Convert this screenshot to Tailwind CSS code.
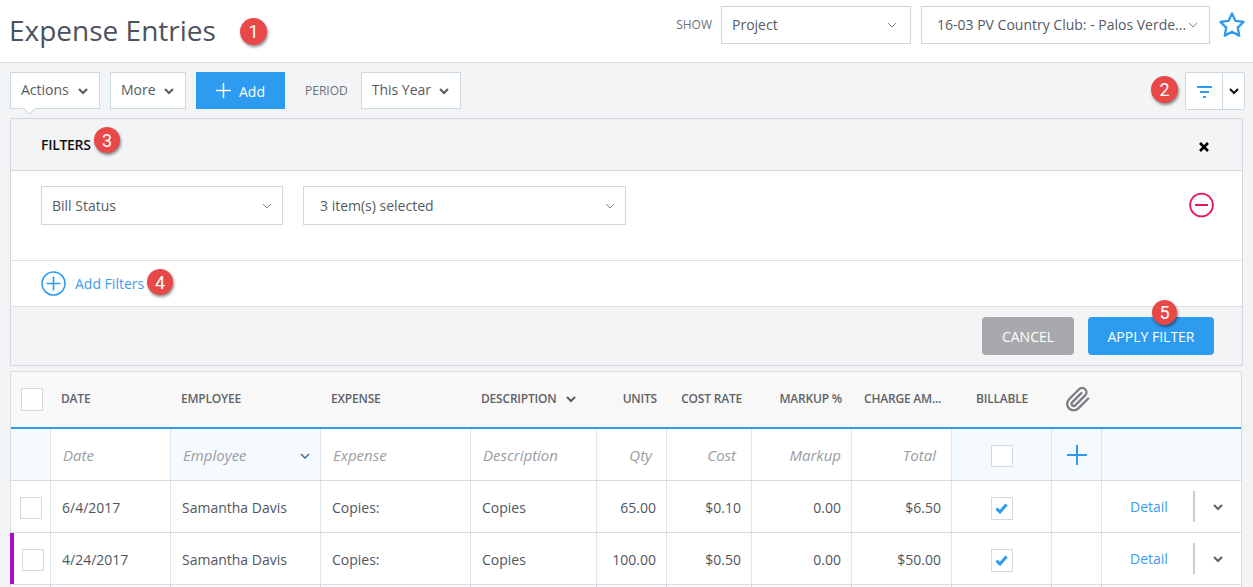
<!DOCTYPE html>
<html lang="en">
<head>
  <meta charset="UTF-8" />
  <title>Expense Entries</title>
  <script src="https://cdn.jsdelivr.net/npm/@tailwindcss/browser@4"></script>
</head>
<body class="h-[587px] overflow-hidden bg-[#f3f4f6] font-['Open_Sans',sans-serif] text-[14px] text-[#555b63] relative">

<!-- Top header -->
<header class="h-[63px] bg-white border-b border-[#d5dce2] flex items-center pl-[9px]">
  <h1 class="text-[28px] leading-none text-[#4d535c] -mt-[3px]">Expense Entries</h1>
  <div class="ml-auto flex items-center self-start pt-[6px]">
    <span class="text-[12px] text-[#6b7179] mr-[9px]">SHOW</span>
    <div class="w-[190px] h-[38px] bg-white border border-[#ccd6de] flex items-center pl-[10px] pr-[13px] justify-between">
      <span class="-mt-[2px]">Project</span>
      <svg class="w-[10px] h-[6px]" viewBox="0 0 10 6" fill="none" stroke="#7a8590" stroke-width="1"><path d="M1 1l4 4 4-4"/></svg>
    </div>
    <div class="w-[289px] h-[38px] ml-[10px] bg-white border border-[#ccd6de] flex items-center pl-[15px] pr-[11px] justify-between">
      <span class="whitespace-nowrap -mt-[2px]">16-03 PV Country Club: - Palos Verde...</span>
      <svg class="w-[10px] h-[6px]" viewBox="0 0 10 6" fill="none" stroke="#7a8590" stroke-width="1"><path d="M1 1l4 4 4-4"/></svg>
    </div>
    <svg class="w-[28px] h-[28px] ml-[8px] mr-[7px]" viewBox="0 0 24 24" fill="none" stroke="#2d9bf0" stroke-width="2" stroke-linejoin="round"><path d="M12 2.2l3 6.3 6.9.9-5 4.8 1.3 6.9-6.2-3.4-6.2 3.4 1.3-6.9-5-4.8 6.9-.9z"/></svg>
  </div>
</header>

<!-- Toolbar -->
<div class="h-[55px] flex items-start pt-[9px] pl-[10px] pr-[8px]">
  <div class="relative w-[90px] h-[37px] bg-white border border-[#ccd9e0] flex items-center justify-between pl-[10px] pr-[11px]">
    <span class="-mt-[2px]">Actions</span>
    <svg class="w-[10px] h-[7px] mt-[2px]" viewBox="0 0 10 7" fill="none" stroke="#555b63" stroke-width="2"><path d="M1 1l4 4 4-4"/></svg>
    <span class="absolute left-[14px] -bottom-[5px] w-[9px] h-[9px] bg-white border-r border-b border-[#ccd9e0] rotate-45"></span>
  </div>
  <div class="w-[76px] h-[37px] ml-[10px] bg-white border border-[#ccd9e0] flex items-center justify-between pl-[10px] pr-[11px]">
    <span class="-mt-[2px]">More</span>
    <svg class="w-[10px] h-[7px] mt-[2px]" viewBox="0 0 10 7" fill="none" stroke="#555b63" stroke-width="2"><path d="M1 1l4 4 4-4"/></svg>
  </div>
  <div class="w-[89px] h-[37px] ml-[10px] bg-[#2d9bf0] text-white flex items-center justify-center gap-[8px]">
    <svg class="w-[15px] h-[15px]" viewBox="0 0 15 15" stroke="#fff" stroke-width="1.5"><path d="M7.5 0v15M0 7.5h15"/></svg>
    <span class="mt-[1px]">Add</span>
  </div>
  <span class="ml-[20px] mt-[10px] text-[12px] text-[#6b7179]">PERIOD</span>
  <div class="w-[100px] h-[37px] ml-[13px] bg-white border border-[#ccd9e0] flex items-center justify-between pl-[10px] pr-[11px]">
    <span class="-mt-[2px]">This Year</span>
    <svg class="w-[10px] h-[7px] mt-[2px]" viewBox="0 0 10 7" fill="none" stroke="#555b63" stroke-width="2"><path d="M1 1l4 4 4-4"/></svg>
  </div>
  <div class="ml-auto w-[60px] h-[38px] bg-white border border-[#ccd9e0] rounded-[2px] flex">
    <div class="w-[37px] border-r border-[#ccd9e0] flex items-center justify-center">
      <svg class="w-[15px] h-[12px] mt-[2px]" viewBox="0 0 15 12" stroke="#2d9bf0" stroke-width="2"><path d="M0 1h15M3 6h9M6 11h3"/></svg>
    </div>
    <div class="flex-1 flex items-center justify-center">
      <svg class="w-[10px] h-[7px]" viewBox="0 0 10 7" fill="none" stroke="#111" stroke-width="2"><path d="M1 1l4 4 4-4"/></svg>
    </div>
  </div>
</div>

<!-- Filters panel -->
<section class="ml-[10px] w-[1233px] h-[248px] border border-[#d3d7db] flex flex-col">
  <div class="h-[52px] shrink-0 border-b border-[#d3d8de] flex items-center justify-between pl-[30px] pr-[33px]">
    <span class="text-[14px] font-semibold text-[#111] tracking-[-0.3px]">FILTERS</span>
    <svg class="w-[10px] h-[10px] mt-[4px]" viewBox="0 0 10 10" stroke="#000" stroke-width="2.6"><path d="M1 1l8 8M9 1l-8 8"/></svg>
  </div>
  <div class="h-[90px] shrink-0 bg-white border-b border-[#dbe1e7] flex items-start pt-[15px] pl-[30px] pr-[28px]">
    <div class="w-[242px] h-[39px] border border-[#ccd9e0] flex items-center justify-between pl-[10px] pr-[10px]">
      <span>Bill Status</span>
      <svg class="w-[10px] h-[6px]" viewBox="0 0 10 6" fill="none" stroke="#7a8590" stroke-width="1"><path d="M1 1l4 4 4-4"/></svg>
    </div>
    <div class="w-[323px] h-[39px] ml-[20px] border border-[#ccd9e0] flex items-center justify-between pl-[16px] pr-[10px]">
      <span>3 item(s) selected</span>
      <svg class="w-[10px] h-[6px]" viewBox="0 0 10 6" fill="none" stroke="#7a8590" stroke-width="1"><path d="M1 1l4 4 4-4"/></svg>
    </div>
    <svg class="ml-auto mt-[6px] w-[25px] h-[26px]" viewBox="0 0 25 26" fill="none" stroke="#e8175d" stroke-width="1.8"><circle cx="12.5" cy="13" r="11.4"/><path d="M6 13h13" stroke-width="2"/></svg>
  </div>
  <div class="h-[46px] shrink-0 bg-white border-b border-[#dbe1e7] flex items-center pl-[30px]">
    <svg class="w-[25px] h-[25px]" viewBox="0 0 25 25" fill="none" stroke="#2d9bf0" stroke-width="1.6"><circle cx="12.5" cy="12.5" r="11.5"/><path d="M12.5 5.5v14M5.5 12.5h14"/></svg>
    <span class="ml-[9px] text-[#3d9cf0] -mt-[1px]">Add Filters</span>
  </div>
  <div class="flex-1 flex items-start justify-end pt-[10px] pr-[28px] gap-[14px]">
    <div class="w-[92px] h-[38px] rounded-[4px] bg-[#a7a9ac] text-white flex items-center justify-center">CANCEL</div>
    <div class="w-[126px] h-[38px] rounded-[4px] bg-[#2d9bf0] text-white flex items-center justify-center">APPLY FILTER</div>
  </div>
</section>

<!-- Expense table -->
<section class="ml-[10px] mt-[5px] w-[1232px] bg-white border-x border-t border-[#d9dde1] text-[#50565e]">
  <div class="h-[57px] pb-[2px] bg-[#f8f8f8] border-b-2 border-[#2d9bf0] grid grid-cols-[40px_120px_150px_150px_126px_70px_85px_100px_100px_100px_50px_1fr] items-center text-[12px] font-semibold tracking-[-0.2px] text-[#5f6368]">
    <div class="pl-[10px] pt-[2px]"><div class="w-[22px] h-[23px] bg-white border border-[#d3d9de]"></div></div>
    <div class="pl-[10px]">DATE</div>
    <div class="pl-[10px]">EMPLOYEE</div>
    <div class="pl-[10px]">EXPENSE</div>
    <div class="pl-[10px] flex items-center gap-[10px]">DESCRIPTION
      <svg class="w-[10px] h-[7px] mt-[1px]" viewBox="0 0 10 7" fill="none" stroke="#555b63" stroke-width="2"><path d="M1 1l4 4 4-4"/></svg>
    </div>
    <div class="text-right pr-[10px]">UNITS</div>
    <div class="text-right pr-[10px]">COST RATE</div>
    <div class="text-right pr-[10px]">MARKUP %</div>
    <div class="pl-[12px] whitespace-nowrap">CHARGE AM...</div>
    <div class="pl-[24px]">BILLABLE</div>
    <div class="pl-[13px] pt-[2px]">
      <svg class="w-[26px] h-[27px]" viewBox="0 0 24 24" fill="none" stroke="#7b7f84" stroke-width="2.2" stroke-linecap="round" stroke-linejoin="round"><path d="M21.44 11.05l-9.19 9.19a6 6 0 0 1-8.49-8.49l9.19-9.19a4 4 0 0 1 5.66 5.66l-9.2 9.19a2 2 0 0 1-2.83-2.83l8.49-8.48"/></svg>
    </div>
    <div></div>
  </div>

  <!-- Quick-add row -->
  <div class="h-[52px] border-b border-[#d5dce3] grid grid-cols-[40px_120px_150px_150px_126px_70px_85px_100px_100px_100px_50px_1fr] italic text-[15px] text-[#9a9da1] [&>div]:pt-[2px]">
    <div class="bg-[#f5fafe] border-r border-dotted border-[#c5d2dc]"></div>
    <div class="border-r border-dotted border-[#c5d2dc] pl-[12px] flex items-center">Date</div>
    <div class="bg-[#f5fafe] border-r border-dotted border-[#c5d2dc] pl-[12px] pr-[10px] flex items-center justify-between">Employee
      <svg class="w-[10px] h-[6px]" viewBox="0 0 10 6" fill="none" stroke="#3f6b8f" stroke-width="1.4"><path d="M1 1l4 4 4-4"/></svg>
    </div>
    <div class="border-r border-dotted border-[#c5d2dc] pl-[12px] flex items-center">Expense</div>
    <div class="border-r border-dotted border-[#c5d2dc] pl-[12px] flex items-center">Description</div>
    <div class="border-r border-dotted border-[#c5d2dc] pr-[14px] flex items-center justify-end">Qty</div>
    <div class="border-r border-dotted border-[#c5d2dc] pr-[15px] flex items-center justify-end">Cost</div>
    <div class="border-r border-dotted border-[#c5d2dc] pr-[10px] flex items-center justify-end">Markup</div>
    <div class="border-r border-dotted border-[#c5d2dc] pr-[15px] flex items-center justify-end">Total</div>
    <div class="bg-[#f5fafe] border-r border-dotted border-[#c5d2dc] flex items-center justify-center"><div class="w-[22px] h-[22px] bg-white border border-[#d3d9de]"></div></div>
    <div class="bg-[#f5fafe] border-r border-dotted border-[#c5d2dc] flex items-center justify-center">
      <svg class="w-[22px] h-[22px] -mt-[2px]" viewBox="0 0 22 22" stroke="#2d9bf0" stroke-width="2"><path d="M11 1v20M1 11h20"/></svg>
    </div>
    <div class="bg-[#f5fafe]"></div>
  </div>

  <!-- Row 1 -->
  <div class="h-[52px] border-b border-[#d5dce3] grid grid-cols-[40px_120px_150px_150px_126px_70px_85px_100px_100px_100px_50px_1fr] [&>div]:pt-[2px]">
    <div class="border-r border-dotted border-[#c5d2dc] pl-[9px] flex items-center"><div class="w-[22px] h-[22px] bg-white border border-[#d3d9de] mt-[1px]"></div></div>
    <div class="border-r border-dotted border-[#c5d2dc] pl-[11px] flex items-center">6/4/2017</div>
    <div class="border-r border-dotted border-[#c5d2dc] pl-[11px] flex items-center">Samantha Davis</div>
    <div class="border-r border-dotted border-[#c5d2dc] pl-[11px] flex items-center">Copies:</div>
    <div class="border-r border-dotted border-[#c5d2dc] pl-[11px] flex items-center">Copies</div>
    <div class="border-r border-dotted border-[#c5d2dc] pr-[10px] flex items-center justify-end">65.00</div>
    <div class="border-r border-dotted border-[#c5d2dc] pr-[10px] flex items-center justify-end">$0.10</div>
    <div class="border-r border-dotted border-[#c5d2dc] pr-[10px] flex items-center justify-end">0.00</div>
    <div class="border-r border-dotted border-[#c5d2dc] pr-[10px] flex items-center justify-end">$6.50</div>
    <div class="border-r border-dotted border-[#c5d2dc] flex items-center justify-center">
      <div class="w-[22px] h-[23px] mt-[1px] bg-white border border-[#d3d9de] flex items-center justify-center"><svg class="w-[13px] h-[11px] mt-[1px]" viewBox="0 0 13 11" fill="none" stroke="#2d9bf0" stroke-width="3"><path d="M1.5 5.5l3.5 3.5 6.5-7.5"/></svg></div>
    </div>
    <div class="border-r border-dotted border-[#c5d2dc]"></div>
    <div class="flex items-center pl-[28px]">
      <span class="text-[#3d9cf0] -mt-[2px]">Detail</span>
      <span class="ml-[25px] w-[2px] h-[31px] bg-[#c9ced2] -mt-[3px]"></span>
      <svg class="ml-[18px] w-[10px] h-[7px]" viewBox="0 0 10 7" fill="none" stroke="#5b6168" stroke-width="2"><path d="M1 1l4 4 4-4"/></svg>
    </div>
  </div>

  <!-- Row 2 -->
  <div class="relative h-[52px] border-b border-[#d5dce3] grid grid-cols-[40px_120px_150px_150px_126px_70px_85px_100px_100px_100px_50px_1fr] [&>div]:pt-[2px]">
    <span class="absolute -left-[1px] top-0 bottom-0 w-[4px] bg-[#a80dc9]"></span>
    <div class="border-r border-dotted border-[#c5d2dc] pl-[11px] flex items-center"><div class="w-[22px] h-[22px] bg-white border border-[#d3d9de] mt-[1px]"></div></div>
    <div class="border-r border-dotted border-[#c5d2dc] pl-[11px] flex items-center">4/24/2017</div>
    <div class="border-r border-dotted border-[#c5d2dc] pl-[11px] flex items-center">Samantha Davis</div>
    <div class="border-r border-dotted border-[#c5d2dc] pl-[11px] flex items-center">Copies:</div>
    <div class="border-r border-dotted border-[#c5d2dc] pl-[11px] flex items-center">Copies</div>
    <div class="border-r border-dotted border-[#c5d2dc] pr-[10px] flex items-center justify-end">100.00</div>
    <div class="border-r border-dotted border-[#c5d2dc] pr-[10px] flex items-center justify-end">$0.50</div>
    <div class="border-r border-dotted border-[#c5d2dc] pr-[10px] flex items-center justify-end">0.00</div>
    <div class="border-r border-dotted border-[#c5d2dc] pr-[10px] flex items-center justify-end">$50.00</div>
    <div class="border-r border-dotted border-[#c5d2dc] flex items-center justify-center">
      <div class="w-[22px] h-[23px] mt-[1px] bg-white border border-[#d3d9de] flex items-center justify-center"><svg class="w-[13px] h-[11px] mt-[1px]" viewBox="0 0 13 11" fill="none" stroke="#2d9bf0" stroke-width="3"><path d="M1.5 5.5l3.5 3.5 6.5-7.5"/></svg></div>
    </div>
    <div class="border-r border-dotted border-[#c5d2dc]"></div>
    <div class="flex items-center pl-[28px]">
      <span class="text-[#3d9cf0] -mt-[2px]">Detail</span>
      <span class="ml-[25px] w-[2px] h-[31px] bg-[#c9ced2] -mt-[3px]"></span>
      <svg class="ml-[18px] w-[10px] h-[7px]" viewBox="0 0 10 7" fill="none" stroke="#5b6168" stroke-width="2"><path d="M1 1l4 4 4-4"/></svg>
    </div>
  </div>
  <div class="h-[4px] grid grid-cols-[40px_120px_150px_150px_126px_70px_85px_100px_100px_100px_50px_1fr]">
    <div class="border-r border-dotted border-[#c5d2dc]"></div>
    <div class="border-r border-dotted border-[#c5d2dc]"></div>
    <div class="border-r border-dotted border-[#c5d2dc]"></div>
    <div class="border-r border-dotted border-[#c5d2dc]"></div>
    <div class="border-r border-dotted border-[#c5d2dc]"></div>
    <div class="border-r border-dotted border-[#c5d2dc]"></div>
    <div class="border-r border-dotted border-[#c5d2dc]"></div>
    <div class="border-r border-dotted border-[#c5d2dc]"></div>
    <div class="border-r border-dotted border-[#c5d2dc]"></div>
    <div class="border-r border-dotted border-[#c5d2dc]"></div>
    <div class="border-r border-dotted border-[#c5d2dc]"></div>
  </div>
</section>

<!-- Numbered callouts laid over the screenshot -->
<div class="absolute left-[240px] top-[18px] w-[27px] h-[27px] rounded-full bg-[#e94848] text-white text-[18px] flex items-center justify-center shadow-[1px_2px_3px_rgba(0,0,0,0.45)] font-['Roboto',sans-serif]">1</div>
<div class="absolute left-[1151px] top-[76px] w-[27px] h-[27px] rounded-full bg-[#e94848] text-white text-[18px] flex items-center justify-center shadow-[1px_2px_3px_rgba(0,0,0,0.45)] font-['Roboto',sans-serif]">2</div>
<div class="absolute left-[94px] top-[127px] w-[26px] h-[26px] rounded-full bg-[#e94848] text-white text-[18px] flex items-center justify-center shadow-[1px_2px_3px_rgba(0,0,0,0.45)] font-['Roboto',sans-serif]">3</div>
<div class="absolute left-[147px] top-[269px] w-[26px] h-[26px] rounded-full bg-[#e94848] text-white text-[18px] flex items-center justify-center shadow-[1px_2px_3px_rgba(0,0,0,0.45)] font-['Roboto',sans-serif]">4</div>
<div class="absolute left-[1152px] top-[300px] w-[25px] h-[25px] rounded-full bg-[#e94848] text-white text-[18px] flex items-center justify-center shadow-[1px_2px_3px_rgba(0,0,0,0.45)] font-['Roboto',sans-serif]">5</div>

</body>
</html>
